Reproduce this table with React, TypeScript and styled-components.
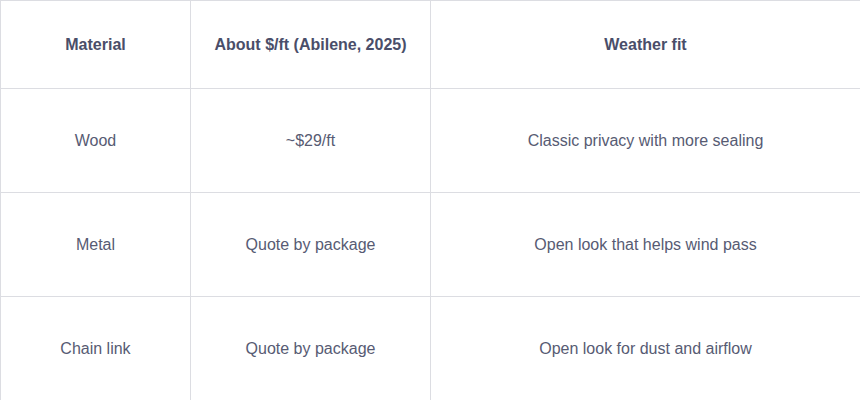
import React from "react";
import styled, { createGlobalStyle } from "styled-components";

const Global = createGlobalStyle`
  html, body { margin: 0; padding: 0; background: #ffffff; }
  body { font-family: "Liberation Sans", Arial, sans-serif; }
`;

const Table = styled.table`
  width: 860px;
  border-collapse: collapse;
  table-layout: fixed;
  font-family: "Liberation Sans", Arial, sans-serif;
  font-size: 16px;
  line-height: 24px;
`;

const Col = styled.col<{ $w: number }>`
  width: ${(p) => p.$w}px;
`;

const HeadCell = styled.th`
  height: 88px;
  padding: 0 12px;
  box-sizing: border-box;
  border: 1px solid #dcdde2;
  font-weight: 700;
  color: #4a4e69;
  text-align: center;
  vertical-align: middle;
`;

const Cell = styled.td`
  height: 104px;
  padding: 0 12px;
  box-sizing: border-box;
  border: 1px solid #dcdde2;
  font-weight: 400;
  color: #575b73;
  text-align: center;
  vertical-align: middle;
`;

const rows = [
  ["Wood", "~$29/ft", "Classic privacy with more sealing"],
  ["Metal", "Quote by package", "Open look that helps wind pass"],
  ["Chain link", "Quote by package", "Open look for dust and airflow"],
];

export default function App() {
  return (
    <>
      <Global />
      <Table>
        <colgroup>
          <Col $w={190} />
          <Col $w={240} />
          <Col $w={430} />
        </colgroup>
        <thead>
          <tr>
            <HeadCell>Material</HeadCell>
            <HeadCell>About $/ft (Abilene, 2025)</HeadCell>
            <HeadCell>Weather fit</HeadCell>
          </tr>
        </thead>
        <tbody>
          {rows.map((r) => (
            <tr key={r[0]}>
              {r.map((c, i) => (
                <Cell key={i}>{c}</Cell>
              ))}
            </tr>
          ))}
        </tbody>
      </Table>
    </>
  );
}
